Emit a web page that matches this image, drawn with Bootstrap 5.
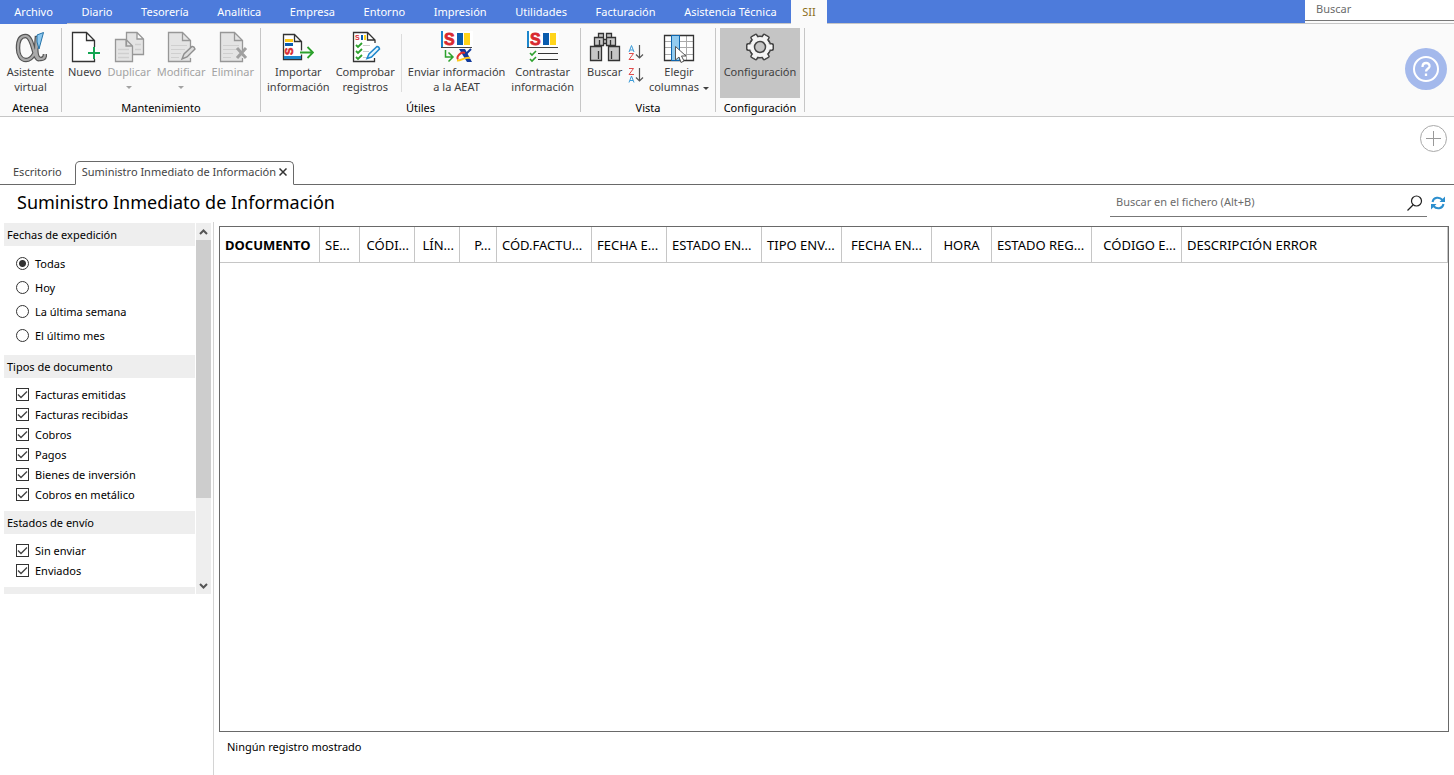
<!DOCTYPE html>
<html lang="es">
<head>
<meta charset="utf-8">
<meta name="viewport" content="width=device-width, initial-scale=1">
<title>Suministro Inmediato de Información</title>
<link href="https://cdn.jsdelivr.net/npm/bootstrap@5.3.0/dist/css/bootstrap.min.css" rel="stylesheet">
<style>
:root { --app-blue: #4d7bdb; --line: #c6c6c6; --frame: #696969; }
body { font-family: "Noto Sans", "Open Sans", sans-serif; font-size: 11px; line-height: 15px; color: #000; }
.menu-bar { background: var(--app-blue); height: 24px; box-shadow: inset 0 -1px var(--line); }
.menu-bar .nav { width: 827px; }
.menu-bar .nav-link { flex: 1 1 auto; text-align: center; color: #fff; padding: 0 14px; height: 24px; line-height: 24px; border-radius: 0; white-space: nowrap; }
.menu-bar .nav-link:first-child { background: var(--app-blue); }
.menu-bar .nav-link.active { background: #fafafa; color: #8a6d1c; padding: 0 11px; }
.menu-search { width: 149px; height: 21px; border: 0; border-bottom: 1px solid #777; padding: 0 11px 4px; font-size: 11px; color: #666; outline: 0; }
.menu-search::placeholder, .file-search input::placeholder { color: #6b6b6b; opacity: 1; }
.search-slot { background: #fafafa; box-shadow: inset 0 -1px var(--line); }
.ribbon { background: #fafafa; height: 93px; border-bottom: 1px solid var(--line); }
.ribbon-group { margin: 4px 0; padding: 0 4px; border-right: 1px solid var(--line); height: 84px; flex: none; }
.group-atenea { width: 62px; }
.group-edit { width: 199px; }
.group-utils { width: 320px; }
.group-view { width: 135px; }
.group-config { width: 89px; }
.tools { height: 70px; justify-content: space-between; }
.tool { border: 0; background: none; color: #404040; padding: 3px 2px; display: flex; flex-direction: column; align-items: center; white-space: nowrap; height: 70px; }
.tool svg { width: 32px; height: 32px; flex: none; margin-bottom: 1px; }
.tool:disabled { color: #a3a3a3; }
.tool.on { background: #c5c5c5; }
.group-atenea .tool, .group-config .tool { flex: 1 1 auto; }
.tool-div { width: 1px; margin: 6px 2px; background: #dcdcdc; }
.caret { width: 0; border: 3px solid transparent; border-top-color: currentColor; border-bottom: 0; }
.tool > .caret { margin-top: 7px; }
.group-name { line-height: 19px; text-align: center; white-space: nowrap; }
.sort-col { padding-top: 13px; }
.sort-btn { border: 0; background: none; padding: 0; width: 18px; height: 23px; display: block; }
.sort-btn svg { display: block; margin: 0 auto; }
.help-btn { width: 42px; height: 42px; border: 0; border-radius: 50%; background: #a4b9ec; padding: 0; margin: 24px 7px 0 auto; }
.help-btn svg, .add-btn svg { display: block; margin: auto; }
.add-row { height: 44px; padding: 8px 7px; }
.add-btn { border: 1px solid #a9a9a9; border-radius: 50%; width: 27px; height: 27px; background: #fff; padding: 0; }
.doc-tabs { height: 24px; border-bottom: 1px solid var(--frame); }
.doc-tabs .nav-link { color: #444; height: 24px; padding: 0 13px; line-height: 22px; border: 0; }
.doc-tabs .nav-link.active { border: 1px solid var(--frame); border-bottom-color: #fff; border-radius: 5px 5px 0 0; padding: 0 6px; display: flex; align-items: center; color: #444; line-height: 20px; padding-bottom: 2px; }
.close-btn { border: 0; background: none; padding: 0; margin-left: 3px; display: flex; }
.title-row { height: 37px; padding: 0 9px 0 17px; }
.page-title { font-size: 18px; line-height: 35px; margin: 0; font-weight: 400; }
.file-search { width: 317px; height: 27px; margin: 5px 0 0; border-bottom: 1px solid #777; }
.file-search input { border: 0; outline: 0; padding: 0 6px 4px; font-size: 11px; height: 24px; min-width: 0; }
.plain-btn { border: 0; background: none; padding: 0; display: flex; }
.refresh-btn { padding-top: 11px; }
.side { width: 214px; border-right: 1px solid #d4d4d4; padding: 1px 2px 0 4px; }
.filter-view { height: 371px; }
.filters { width: 191px; overflow: hidden; margin-right: 1px; }
.filter-head { background: #eee; height: 23px; line-height: 23px; font-size: 11px; padding-left: 3px; margin: 0; font-weight: 400; }
.filter-set { padding: 6px 0 7px 12px; }
.choice { display: flex; align-items: center; height: 20px; }
.radio-set { padding: 5px 0 8px 12px; }
.radio-set .choice { height: 24px; }
.choice .form-check-input { width: 13px; height: 13px; margin: 0 6px 0 0; border: 1px solid #333; border-radius: 0; background-color: #fff; background-size: 11px 11px; box-shadow: none; flex: none; }
.choice .form-check-input[type=radio] { border-radius: 50%; }
.choice .form-check-input[type=radio]:checked { background-image: radial-gradient(circle, #333 3px, transparent 4px); }
.choice .form-check-input[type=checkbox]:checked { background-image: url("data:image/svg+xml,%3Csvg xmlns='http://www.w3.org/2000/svg' viewBox='0 0 11 11'%3E%3Cpath d='M1 5.5 4 8.500 10 2.500' fill='none' stroke='%23444' stroke-width='1.4'/%3E%3C/svg%3E"); }
.scroll-track { width: 15px; background: #eee; }
.scroll-track svg { display: block; height: 17px; width: 15px; }
.scroll-thumb { background: #cdcdcd; height: 258px; }
.grid-area { padding: 4px 5px 0; min-width: 0; }
.grid-frame { border: 1px solid var(--frame); overflow: hidden; }
.records { table-layout: fixed; width: 100%; border-collapse: separate; border-spacing: 0; font-size: 13px; line-height: 18px; }
.records th { height: 36px; padding: 0 5px; border-right: 1px solid var(--line); border-bottom: 1px solid var(--line); font-weight: 400; white-space: nowrap; overflow: hidden; }
.records th:first-child { font-weight: 700; }
.status-line { height: 43px; line-height: 29px; padding-left: 8px; }
</style>
</head>
<body class="vh-100 d-flex flex-column bg-white overflow-hidden">
<svg class="d-none" aria-hidden="true">
  <symbol id="sheet" viewBox="0 0 32 32"><path d="M25.500 19V9.500L17.500 1.500H3.500V30.500H25.500V27M17.500 1.500V9.500H25.500" fill="#e4e4e4" stroke="#979797" stroke-width="1.300"/><path d="M6 14.500H22M6 18.500H20M6 22.500H16M6 26.500H14" stroke="#cfcfcf"/></symbol>
  <symbol id="sii" viewBox="0 0 32 18"><path d="M0 0H32V17H0Z" fill="#fff"/><path d="M0 0H2V16H0Z" fill="#1c86cc"/><path d="M0 16.500H31" stroke="#444"/><text x="3" y="14" font-family="Liberation Sans" font-weight="700" font-size="16" fill="#d8292f" stroke="#d8292f" stroke-width=".8">S</text><path d="M16 2H22V14H16Z" fill="#0a5cae"/><path d="M23 2H29V14H23Z" fill="#ffd41a"/></symbol>
  <symbol id="gear" viewBox="0 0 32 32"><circle cx="16" cy="16" r="9.500"/><path d="M4 14H28V18H4Z"/><path d="M4 14H28V18H4Z" transform="rotate(60 16 16)"/><path d="M4 14H28V18H4Z" transform="rotate(120 16 16)"/></symbol>
</svg>

<header>
  <div class="menu-bar d-flex justify-content-between">
    <nav class="nav flex-nowrap" aria-label="Menú principal">
      <a class="nav-link" href="#">Archivo</a><a class="nav-link" href="#">Diario</a><a class="nav-link" href="#">Tesorería</a><a class="nav-link" href="#">Analítica</a><a class="nav-link" href="#">Empresa</a><a class="nav-link" href="#">Entorno</a><a class="nav-link" href="#">Impresión</a><a class="nav-link" href="#">Utilidades</a><a class="nav-link" href="#">Facturación</a><a class="nav-link" href="#">Asistencia Técnica</a><a class="nav-link active" href="#">SII</a>
    </nav>
    <div class="search-slot"><input class="menu-search d-block" type="search" placeholder="Buscar" aria-label="Buscar"></div>
  </div>

  <div class="ribbon d-flex">
    <section class="ribbon-group group-atenea">
      <div class="tools d-flex">
        <button class="tool"><svg viewBox="0 0 32 32" fill="none"><path d="M22 5C21 16 20 28 26 28 29 28 30 26 30 23M25 28C18 31 19 5 10.500 5 5 5 3 10 3 17 3 24 6 29 11 29 18 29 22 19 23 9" stroke="#555" stroke-width="4.500"/><path d="M22 6C21 16 20 28 26 28 29 28 30 26 30 23M25 28C18 31 19 5 10.500 5 5 5 3 10 3 17 3 24 6 29 11 29 18 29 22 19 23 9" stroke="#aaa" stroke-width="2.200"/><path d="M22 4 28.500 1.500 24 18 22 11Z" fill="#8cc8f0" stroke="#2673a8"/></svg>Asistente<br>virtual</button>
      </div>
      <div class="group-name">Atenea</div>
    </section>
    <section class="ribbon-group group-edit">
      <div class="tools d-flex">
        <button class="tool"><svg viewBox="0 0 32 32"><path d="M25.500 17V9.500L17.500 1.500H3.500V30.500H25.500V28M17.500 1.500V9.500H25.500" fill="#fff" stroke="#333" stroke-width="1.300"/><path d="M19 22H31M25 16V28" stroke="#fff" stroke-width="4"/><path d="M19 22H31M25 16V28" stroke="#13a552" stroke-width="2"/></svg>Nuevo</button>
        <button class="tool" disabled><svg viewBox="0 0 32 32" fill="#e4e4e4" stroke="#979797" stroke-width="1.300"><path d="M13.500 1.500H24L30.500 8V23.500H13.500ZM24 1.500V8H30.500"/><path d="M2.500 8.500H13L19.500 15V30.500H2.500ZM13 8.500V15H19.500"/><path d="M5 18.500H16M5 22.500H16M5 26.500H16M22 13.500H28M22 18.500H28" stroke="#cfcfcf"/></svg>Duplicar<span class="caret"></span></button>
        <button class="tool" disabled><svg viewBox="0 0 32 32"><use href="#sheet"/><path d="M17 28 19 23 27 15.500Q29 15 30 18L22 26Z" fill="#ddd" stroke="#8f8f8f" stroke-width="1.400"/></svg>Modificar<span class="caret"></span></button>
        <button class="tool" disabled><svg viewBox="0 0 32 32"><use href="#sheet"/><path d="M20 17 29 27M29 17 20 27" stroke="#a0a0a0" stroke-width="3"/></svg>Eliminar</button>
      </div>
      <div class="group-name">Mantenimiento</div>
    </section>
    <section class="ribbon-group group-utils">
      <div class="tools d-flex">
        <button class="tool"><svg viewBox="0 0 32 32" fill="none"><path d="M1.500 3.500H12.500L19.500 10.500V28.500H1.500ZM12.500 3.500V10.500H19.500" fill="#fff" stroke="#333" stroke-width="1.300"/><path d="M2 25H19V28H2Z" fill="#1c86cc"/><path d="M3 8H11V11H3Z" fill="#ffc91a"/><path d="M3 12H11V15H3Z" fill="#0a5cae"/><text transform="translate(11 24) rotate(-90)" font-family="Liberation Sans" font-weight="700" font-size="11" fill="#d8292f" stroke="#d8292f" stroke-width=".6">S</text><path d="M18 21.500H31M26 16 31 21.500 26 27" stroke="#fff" stroke-width="4"/><path d="M18 21.500H31M25.500 16 31 21.500 25.500 27" stroke="#2da12d" stroke-width="1.800"/></svg>Importar<br>información</button>
        <button class="tool"><svg viewBox="0 0 32 32" fill="none"><path d="M26 12V9L18.500 1.500H4.500V30.500H25.500V27M18.500 1.500V9H26" fill="#fff" stroke="#333" stroke-width="1.300"/><text x="6" y="9" font-family="Liberation Sans" font-weight="700" font-size="7" fill="#d8292f">S</text><path d="M12 4H14V9H12Z" fill="#0a5cae"/><path d="M15 4H17V9H15Z" fill="#ffd41a"/><path d="M14 14.500H21M14 20.500H20M14 26.500H18" stroke="#ccc"/><path d="m7 14 2 2 4-4M7 20l2 2 4-4M7 26l2 2 4-4" stroke="#2da12d" stroke-width="1.800"/><path d="M18 27.500 20 23 28 15.500Q30 15.500 30.500 18L22.500 26Z" fill="#e6f4fc" stroke="#1c86cc" stroke-width="1.500"/></svg>Comprobar<br>registros</button>
        <div class="tool-div"></div>
        <button class="tool"><svg viewBox="0 0 32 32" fill="none"><use href="#sii" width="32" height="18"/><path d="M4.500 19V26H11M7.500 21.500 12 26 7.500 30.500" stroke="#2da12d" stroke-width="1.500"/><path d="M18 18H24L31 31H26Z" fill="#123a9c"/><path d="M25 23 30 18" stroke="#123a9c" stroke-width="2"/><path d="M24 22C20 20 15 26 17 28.500" stroke="#e5322d" stroke-width="2"/><path d="M16 29.500C20 30 23 26 29 27" stroke="#ffc91a" stroke-width="2"/></svg>Enviar información<br>a la AEAT</button>
        <button class="tool"><svg viewBox="0 0 32 32" fill="none"><use href="#sii" width="32" height="18"/><path d="M11 22.500H31M11 28.500H31" stroke="#333" stroke-width="1.200"/><path d="m3 22 2 2 4-4M3 28l2 2 4-4" stroke="#2da12d" stroke-width="1.600"/></svg>Contrastar<br>información</button>
      </div>
      <div class="group-name">Útiles</div>
    </section>
    <section class="ribbon-group group-view">
      <div class="tools d-flex">
        <button class="tool"><svg viewBox="0 0 32 32" fill="#c6c6c6" stroke="#333" stroke-width="1.300"><path d="M9.500 2.500H14.500V6.500H9.500ZM17.500 2.500H22.500V6.500H17.500ZM5.500 6.500H14.500V14.500H5.500ZM17.500 6.500H26.500V14.500H17.500ZM1.500 15.500H12.500V29.500H1.500ZM19.500 15.500H30.500V29.500H19.500ZM14.500 8.500H17.500V12.500H14.500Z"/><path d="M10.500 9V14M21.500 9V14M9.500 20V28M22.500 20V28"/></svg>Buscar</button>
        <div class="sort-col">
          <button class="sort-btn" aria-label="Orden ascendente"><svg width="16" height="17" viewBox="0 0 16 17" fill="none"><path d="M1 8 3.500 1.500 6 8M2 6H5" stroke="#3a9bd8"/><path d="M1 9.500H5.500L1 15.500H6" stroke="#e04b4b"/><path d="M11.500 1V14M8 10.500 11.500 14 15 10.500" stroke="#555" stroke-width="1.200"/></svg></button>
          <button class="sort-btn" aria-label="Orden descendente"><svg width="16" height="17" viewBox="0 0 16 17" fill="none"><path d="M1 1.500H5.500L1 7.500H6" stroke="#e04b4b"/><path d="M1 15.500 3.500 9 6 15.500M2 13.500H5" stroke="#3a9bd8"/><path d="M11.500 1V14M8 10.500 11.500 14 15 10.500" stroke="#555" stroke-width="1.200"/></svg></button>
        </div>
        <button class="tool"><svg viewBox="0 0 32 32"><path d="M1.500 4.500H30.500V29.500H1.500Z" fill="#fff"/><path d="M1 10.500H31M1 16.500H31M1 23.500H31M23.500 4V30" stroke="#aaa"/><path d="M1.500 4.500H30.500V29.500H1.500Z" fill="none" stroke="#333" stroke-width="1.300"/><path d="M8.500 4.500H16.500V29.500H8.500Z" fill="#92cbef" stroke="#0d66b0"/><path d="M12.500 15.500V29L16 26 18 31.500 21 30 18.500 25H23Z" fill="#fff" stroke="#555"/></svg>Elegir<span>columnas<span class="caret d-inline-block align-middle ms-1"></span></span></button>
      </div>
      <div class="group-name">Vista</div>
    </section>
    <section class="ribbon-group group-config">
      <div class="tools d-flex">
        <button class="tool on"><svg viewBox="0 0 32 32"><use href="#gear" fill="#444" stroke="#444" stroke-width="4" stroke-linejoin="round"/><use href="#gear" fill="#f4f4f4" stroke="#f4f4f4" stroke-width="1"/><circle cx="16" cy="16" r="5.500" fill="#c5c5c5" stroke="#444" stroke-width="1.500"/></svg>Configuración</button>
      </div>
      <div class="group-name">Configuración</div>
    </section>
    <button class="help-btn" aria-label="Ayuda"><svg width="28" height="28" viewBox="0 0 28 28" fill="none" stroke="#fff" stroke-width="2"><circle cx="14" cy="14" r="12"/><path d="M10.500 12C10.500 6.500 18 7 17.500 11.500 17 14 14 13.500 14 16.500M14 18.500V21" stroke-width="2.300"/></svg></button>
  </div>
</header>

<div class="add-row text-end"><button class="add-btn" aria-label="Añadir"><svg width="15" height="15" viewBox="0 0 15 15" stroke="#999"><path d="M0 7.500H15M7.500 0V15"/></svg></button></div>
<div class="doc-tabs nav flex-nowrap">
  <a class="nav-link" href="#">Escritorio</a>
  <div class="nav-link active">Suministro Inmediato de Información<button class="close-btn" aria-label="Cerrar"><svg width="8" height="8" viewBox="0 0 8 8" stroke="#333" stroke-width="1.500"><path d="M.5.5 7.500 7.500M7.500.5.5 7.500"/></svg></button></div>
</div>

<div class="title-row d-flex justify-content-between">
  <h1 class="page-title">Suministro Inmediato de Información</h1>
  <div class="d-flex">
    <div class="file-search d-flex align-items-center">
      <input class="flex-grow-1" type="search" placeholder="Buscar en el fichero (Alt+B)" aria-label="Buscar en el fichero">
      <button class="plain-btn me-1" aria-label="Buscar"><svg width="16" height="16" viewBox="0 0 16 16" fill="none" stroke="#222" stroke-width="1.200"><circle cx="9.500" cy="6" r="5"/><path d="M6 10 .5 15.500"/></svg></button>
    </div>
    <button class="plain-btn refresh-btn ms-1" aria-label="Actualizar"><svg width="14" height="14" viewBox="0 0 14 14" fill="none" stroke="#2c8fce" stroke-width="2"><path d="M1.500 6C2.500 1 8.500.5 11.500 4M12.500 8C11.500 13 5.500 13.500 2.500 10"/><path d="M14 .5V6H8.500ZM0 13.500V8H5.500Z" fill="#2c8fce" stroke="none"/></svg></button>
  </div>
</div>

<main class="d-flex flex-grow-1">
  <aside class="side flex-shrink-0">
    <div class="filter-view d-flex">
      <div class="filters">
        <h2 class="filter-head">Fechas de expedición</h2>
        <div class="filter-set radio-set">
          <label class="choice"><input class="form-check-input" type="radio" name="fecha" checked>Todas</label>
          <label class="choice"><input class="form-check-input" type="radio" name="fecha">Hoy</label>
          <label class="choice"><input class="form-check-input" type="radio" name="fecha">La última semana</label>
          <label class="choice"><input class="form-check-input" type="radio" name="fecha">El último mes</label>
        </div>
        <h2 class="filter-head">Tipos de documento</h2>
        <div class="filter-set">
          <label class="choice"><input class="form-check-input" type="checkbox" checked>Facturas emitidas</label>
          <label class="choice"><input class="form-check-input" type="checkbox" checked>Facturas recibidas</label>
          <label class="choice"><input class="form-check-input" type="checkbox" checked>Cobros</label>
          <label class="choice"><input class="form-check-input" type="checkbox" checked>Pagos</label>
          <label class="choice"><input class="form-check-input" type="checkbox" checked>Bienes de inversión</label>
          <label class="choice"><input class="form-check-input" type="checkbox" checked>Cobros en metálico</label>
        </div>
        <h2 class="filter-head">Estados de envío</h2>
        <div class="filter-set">
          <label class="choice"><input class="form-check-input" type="checkbox" checked>Sin enviar</label>
          <label class="choice"><input class="form-check-input" type="checkbox" checked>Enviados</label>
        </div>
        <div class="filter-head"></div>
      </div>
      <div class="scroll-track d-flex flex-column">
        <svg viewBox="0 0 15 17" fill="none" stroke="#555" stroke-width="2"><path d="M4 11 7.500 7.500 11 11"/></svg>
        <div class="scroll-thumb"></div>
        <svg class="mt-auto" viewBox="0 0 15 17" fill="none" stroke="#555" stroke-width="2"><path d="M4 7 7.500 10.500 11 7"/></svg>
      </div>
    </div>
  </aside>
  <section class="grid-area flex-grow-1 d-flex flex-column">
    <div class="grid-frame flex-grow-1">
      <table class="records">
        <colgroup><col width="100"><col width="40"><col width="55"><col width="45"><col width="37"><col width="95"><col width="75"><col width="95"><col width="80"><col width="90"><col width="60"><col width="100"><col width="90"><col></colgroup>
        <thead><tr>
          <th>DOCUMENTO</th><th>SE...</th><th class="text-end">CÓDI...</th><th class="text-end">LÍN...</th><th class="text-end">P...</th><th>CÓD.FACTU...</th><th>FECHA E...</th><th>ESTADO EN...</th><th>TIPO ENV...</th><th class="text-center">FECHA EN...</th><th class="text-center">HORA</th><th>ESTADO REG...</th><th class="text-end">CÓDIGO E...</th><th>DESCRIPCIÓN ERROR</th>
        </tr></thead>
      </table>
    </div>
    <div class="status-line">Ningún registro mostrado</div>
  </section>
</main>
<script src="https://cdn.jsdelivr.net/npm/bootstrap@5.3.0/dist/js/bootstrap.bundle.min.js"></script>
</body>
</html>
